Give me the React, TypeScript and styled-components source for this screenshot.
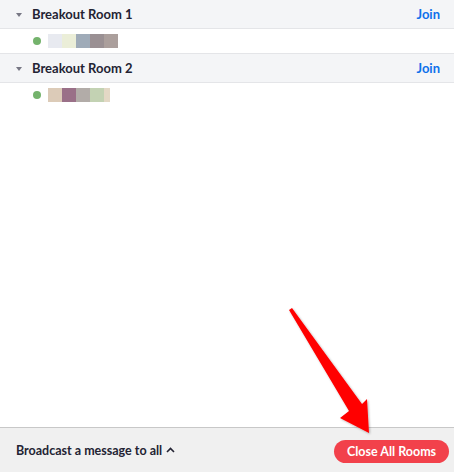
import React from "react";
import styled, { createGlobalStyle } from "styled-components";

const GlobalStyle = createGlobalStyle`
	html, body {
		margin: 0;
		padding: 0;
		background: #ffffff;
	}
	body {
		font-family: Lato, "Open Sans", sans-serif;
	}
`;

const BLUE = "#0e71eb";
const RED = "#f2414b";

interface Participant {
	colors: string[];
}

interface Room {
	name: string;
	participants: Participant[];
}

const ROOMS: Room[] = [
	{
		name: "Breakout Room 1",
		participants: [
			{ colors: ["#e8eaf0", "#ebeed8", "#9fabb8", "#9a9093", "#ab9f9c"] },
		],
	},
	{
		name: "Breakout Room 2",
		participants: [
			{ colors: ["#dccbb8", "#9a7088", "#b2aca8", "#c3d2b3", "#e3d8c5"] },
		],
	},
];

const Page = styled.div`
	position: relative;
	display: flex;
	flex-direction: column;
	width: 454px;
	height: 472px;
	overflow: hidden;
`;

const RoomList = styled.div`
	flex: 1;
	display: flex;
	flex-direction: column;
`;

const RoomHeader = styled.div<{ first: boolean }>`
	display: flex;
	align-items: center;
	height: 28px;
	padding: 0 14px 0 16px;
	background: #f4f5f7;
	border-top: ${(p) => (p.first ? "none" : "1px solid #e4e5e8")};
	border-bottom: 1px solid #e4e5e8;
`;

const Caret = styled.span`
	width: 0;
	height: 0;
	border-left: 3px solid transparent;
	border-right: 3px solid transparent;
	border-top: 4px solid #777784;
	margin-right: 10px;
	margin-top: 1px;
`;

const RoomName = styled.div`
	flex: 1;
	font-size: 13px;
	font-weight: 700;
	color: #232333;
`;

const JoinLink = styled.span`
	font-size: 13px;
	font-weight: 700;
	color: ${BLUE};
`;

const ParticipantRow = styled.div`
	display: flex;
	align-items: center;
	height: 24px;
	padding-left: 33px;
`;

const Dot = styled.span`
	width: 8px;
	height: 8px;
	border-radius: 50%;
	background: #74b36c;
	margin-right: 7px;
`;

const Pixelated = styled.div`
	display: flex;
	height: 14px;
`;

const Pixel = styled.span<{ color: string; w: number }>`
	width: ${(p) => p.w}px;
	height: 100%;
	background: ${(p) => p.color};
`;

const Footer = styled.div`
	display: flex;
	align-items: center;
	justify-content: space-between;
	height: 44px;
	padding: 0 5px 0 16px;
	background: #f0f0f0;
	border-top: 1px solid #c8c8c8;
`;

const Broadcast = styled.div`
	display: flex;
	align-items: center;
	gap: 4px;
	font-size: 12.5px;
	font-weight: 700;
	color: #232333;
`;

const CloseButton = styled.button`
	width: 115px;
	height: 23px;
	margin-top: 3px;
	border: none;
	border-radius: 12px;
	background: ${RED};
	color: #ffffff;
	font-family: Lato, "Open Sans", sans-serif;
	font-size: 12.5px;
	font-weight: 700;
	padding: 0;
`;

const ArrowOverlay = styled.svg`
	position: absolute;
	left: 0;
	top: 0;
	pointer-events: none;
`;

function Arrow() {
	return (
		<ArrowOverlay width={454} height={472} viewBox="0 0 454 472">
			<defs>
				<filter id="sh" x="-20%" y="-20%" width="140%" height="140%">
					<feDropShadow dx="1" dy="1" stdDeviation="1.2" floodColor="#000" floodOpacity="0.3" />
				</filter>
			</defs>
			<polygon
				points="289,310 292,308 362,404 367,399 369,433 340,418 349,411"
				fill="#ff0000"
				filter="url(#sh)"
			/>
		</ArrowOverlay>
	);
}

export default function App() {
	return (
		<>
			<GlobalStyle />
			<Page>
				<RoomList>
					{ROOMS.map((room, i) => (
						<div key={room.name}>
							<RoomHeader first={i === 0}>
								<Caret />
								<RoomName>{room.name}</RoomName>
								<JoinLink>Join</JoinLink>
							</RoomHeader>
							{room.participants.map((p, j) => (
								<ParticipantRow key={j}>
									<Dot />
									<Pixelated>
										{p.colors.map((c, k) => (
											<Pixel
												key={k}
												color={c}
												w={i === 1 && k === p.colors.length - 1 ? 6 : 14}
											/>
										))}
									</Pixelated>
								</ParticipantRow>
							))}
						</div>
					))}
				</RoomList>
				<Footer>
					<Broadcast>
						Broadcast a message to all
						<svg width="9" height="6" viewBox="0 0 9 6">
							<path d="M1 5 L4.5 1.5 L8 5" fill="none" stroke="#232333" strokeWidth="1.6" />
						</svg>
					</Broadcast>
					<CloseButton>Close All Rooms</CloseButton>
				</Footer>
				<Arrow />
			</Page>
		</>
	);
}
